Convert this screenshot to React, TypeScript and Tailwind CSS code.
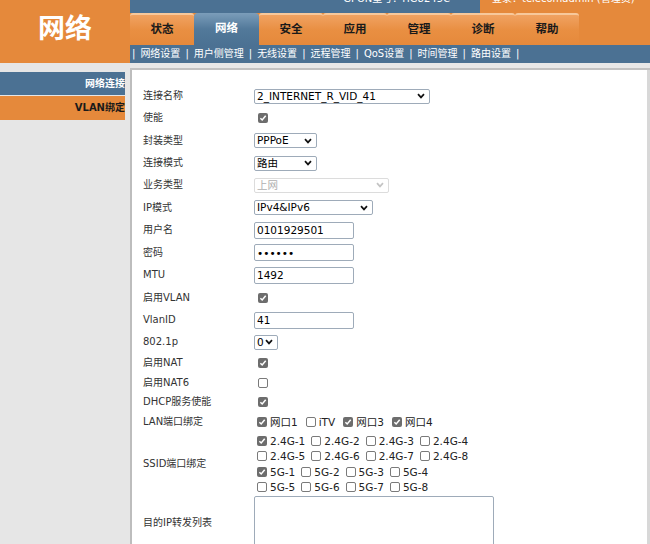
import type { ReactNode } from "react";

const tabs = ["状态", "网络", "安全", "应用", "管理", "诊断", "帮助"];
const subMenu = ["网络设置", "用户侧管理", "无线设置", "远程管理", "QoS设置", "时间管理", "路由设置"];

function Chevron({ disabled }: { disabled?: boolean }) {
  return (
    <svg width="8" height="6" viewBox="0 0 8 6" className="shrink-0">
      <path d="M1 1.2 L4 4.4 L7 1.2" fill="none" stroke={disabled ? "#c4c4c4" : "#111"} strokeWidth="1.7" />
    </svg>
  );
}

function Select({ w, value, disabled }: { w: string; value: string; disabled?: boolean }) {
  return (
    <div
      className={`h-[15px] ${w} flex items-center justify-between rounded-[2px] border bg-white pl-[2px] pr-[4px] ${
        disabled ? "border-[#dcdcdc] text-[#b0b0b0]" : "border-[#9eabb9] text-black"
      }`}
    >
      <span className="text-[10.5px] leading-none">{value}</span>
      <Chevron disabled={disabled} />
    </div>
  );
}

function TextInput({ value, type = "text" }: { value: string; type?: string }) {
  return (
    <input
      type={type}
      readOnly
      defaultValue={value}
      className="h-[17px] w-[100px] rounded-[2px] border border-[#9eabb9] bg-white px-[2px] text-[10.5px] text-black outline-none"
    />
  );
}

function Box({ checked }: { checked?: boolean }) {
  if (checked) {
    return (
      <span className="inline-flex h-[10px] w-[10px] shrink-0 items-center justify-center rounded-[2px] bg-[#6d6d6d]">
        <svg width="8" height="8" viewBox="0 0 8 8">
          <path d="M1.4 4.2 L3.2 6 L6.7 1.8" fill="none" stroke="#fff" strokeWidth="1.5" />
        </svg>
      </span>
    );
  }
  return <span className="inline-block h-[10px] w-[10px] shrink-0 rounded-[2px] border border-[#7a7a7a] bg-white" />;
}

function Check({ label, checked, wide }: { label: string; checked?: boolean; wide?: boolean }) {
  return (
    <span className={`${wide ? "mr-[5px]" : "mr-[3px]"} inline-flex items-center`}>
      <span className="ml-[3px] mr-[3px] inline-flex">
        <Box checked={checked} />
      </span>
      <span className="text-[10.5px] text-[#222]">{label}</span>
    </span>
  );
}

function Row({ h, label, children }: { h: string; label: string; children?: ReactNode }) {
  return (
    <div className={`flex items-center ${h}`}>
      <div className="w-[111px] shrink-0 text-[#333]">{label}</div>
      <div className="flex items-center">{children}</div>
    </div>
  );
}

function Single({ checked }: { checked?: boolean }) {
  return (
    <span className="ml-[4px] inline-flex">
      <Box checked={checked} />
    </span>
  );
}

export default function App() {
  return (
    <div className="flex h-[544px] w-[650px] overflow-hidden bg-[#e6e6e6] font-['DejaVu_Sans','Noto_Sans_CJK_SC',sans-serif] text-[10px] leading-none">
      <aside className="flex w-[130px] shrink-0 flex-col">
        <div className="flex h-[63px] items-center justify-center bg-[#e5893b] pb-[7px] text-[27px] font-bold text-white">
          网络
        </div>
        <div className="mt-[9px] w-[125px]">
          <div className="flex h-[23px] items-center justify-end bg-[#4b7193] font-bold text-white">网络连接</div>
          <div className="mt-[1px] flex h-[24px] items-center justify-end bg-[#e5893b] font-bold text-[#1a1a1a]">
            VLAN绑定
          </div>
        </div>
      </aside>

      <main className="flex min-w-0 flex-1 flex-col">
        <div className="flex h-[13px] overflow-hidden text-[10px] text-white">
          <div className="flex w-[350px] justify-end bg-[#4b7193] pr-[30px]">
            <span className="-mt-[6px]">GPON型号：HG8245C</span>
          </div>
          <div className="flex-1 bg-[#e5893b] pl-[12px]">
            <span className="-mt-[6px] block">登录：telecomadmin (管理员)</span>
          </div>
        </div>

        <div className="flex h-[32px] bg-[#e5893b]">
          {tabs.map((t) =>
            t === "网络" ? (
              <div
                key={t}
                className="flex w-[65px] items-center justify-center rounded-t-[4px] bg-gradient-to-b from-[#7b9dba] via-[#52799a] to-[#4b7193] text-[11.5px] font-bold text-white"
              >
                {t}
              </div>
            ) : (
              <div
                key={t}
                className="flex w-[64px] items-center justify-center rounded-t-[3px] border-t-2 border-[#f7c89b] bg-gradient-to-b from-[#f0a261] via-[#e98f42] to-[#e5893b] text-[11.5px] font-bold text-[#1a1a1a]"
              >
                {t}
              </div>
            )
          )}
        </div>

        <div className="flex h-[18px] items-center bg-[#4b7193] pl-[2px] text-white">
          <span>|</span>
          {subMenu.map((s) => (
            <span key={s} className="flex">
              <span className="px-[5px]">{s}</span>
              <span>|</span>
            </span>
          ))}
        </div>

        <div className="h-[7px] border-b-2 border-[#c2c2c2] bg-[#e8e8e8]" />

        <div className="flex min-h-0 flex-1">
          <div className="flex-1 border-l-2 border-[#bdbdbd] bg-white pl-[11px] pt-[15px]">
            <Row h="h-[22px]" label="连接名称">
              <Select w="w-[176px]" value="2_INTERNET_R_VID_41" />
            </Row>
            <Row h="h-[22px]" label="使能">
              <Single checked />
            </Row>
            <Row h="h-[23px]" label="封装类型">
              <Select w="w-[63px]" value="PPPoE" />
            </Row>
            <Row h="h-[22px]" label="连接模式">
              <Select w="w-[63px]" value="路由" />
            </Row>
            <Row h="h-[22px]" label="业务类型">
              <Select w="w-[135px]" value="上网" disabled />
            </Row>
            <Row h="h-[23px]" label="IP模式">
              <Select w="w-[119px]" value="IPv4&IPv6" />
            </Row>
            <Row h="h-[22px]" label="用户名">
              <TextInput value="0101929501" />
            </Row>
            <Row h="h-[23px]" label="密码">
              <TextInput value="123456" type="password" />
            </Row>
            <Row h="h-[22px]" label="MTU">
              <TextInput value="1492" />
            </Row>
            <Row h="h-[23px]" label="启用VLAN">
              <Single checked />
            </Row>
            <Row h="h-[22px]" label="VlanID">
              <TextInput value="41" />
            </Row>
            <Row h="h-[22px]" label="802.1p">
              <Select w="w-[24px]" value="0" />
            </Row>
            <Row h="h-[20px]" label="启用NAT">
              <Single checked />
            </Row>
            <Row h="h-[19px]" label="启用NAT6">
              <Single />
            </Row>
            <Row h="h-[19px]" label="DHCP服务使能">
              <Single checked />
            </Row>
            <Row h="h-[22px]" label="LAN端口绑定">
              <Check label="网口1" checked wide />
              <Check label="iTV" wide />
              <Check label="网口3" checked wide />
              <Check label="网口4" checked wide />
            </Row>
            <Row h="h-[62px]" label="SSID端口绑定">
              <div className="flex flex-col">
                <div className="flex h-[15.5px] items-center">
                  <Check label="2.4G-1" checked />
                  <Check label="2.4G-2" />
                  <Check label="2.4G-3" />
                  <Check label="2.4G-4" />
                </div>
                <div className="flex h-[15.5px] items-center">
                  <Check label="2.4G-5" />
                  <Check label="2.4G-6" />
                  <Check label="2.4G-7" />
                  <Check label="2.4G-8" />
                </div>
                <div className="flex h-[15.5px] items-center">
                  <Check label="5G-1" checked />
                  <Check label="5G-2" />
                  <Check label="5G-3" />
                  <Check label="5G-4" />
                </div>
                <div className="flex h-[15.5px] items-center">
                  <Check label="5G-5" />
                  <Check label="5G-6" />
                  <Check label="5G-7" />
                  <Check label="5G-8" />
                </div>
              </div>
            </Row>
            <Row h="h-[56px]" label="目的IP转发列表">
              <textarea
                readOnly
                className="h-[54px] w-[240px] resize-none rounded-[2px] border border-[#9eabb9] bg-white outline-none"
              />
            </Row>
          </div>
          <div className="w-[3px] bg-[#d8d8d8]" />
        </div>
      </main>
    </div>
  );
}
